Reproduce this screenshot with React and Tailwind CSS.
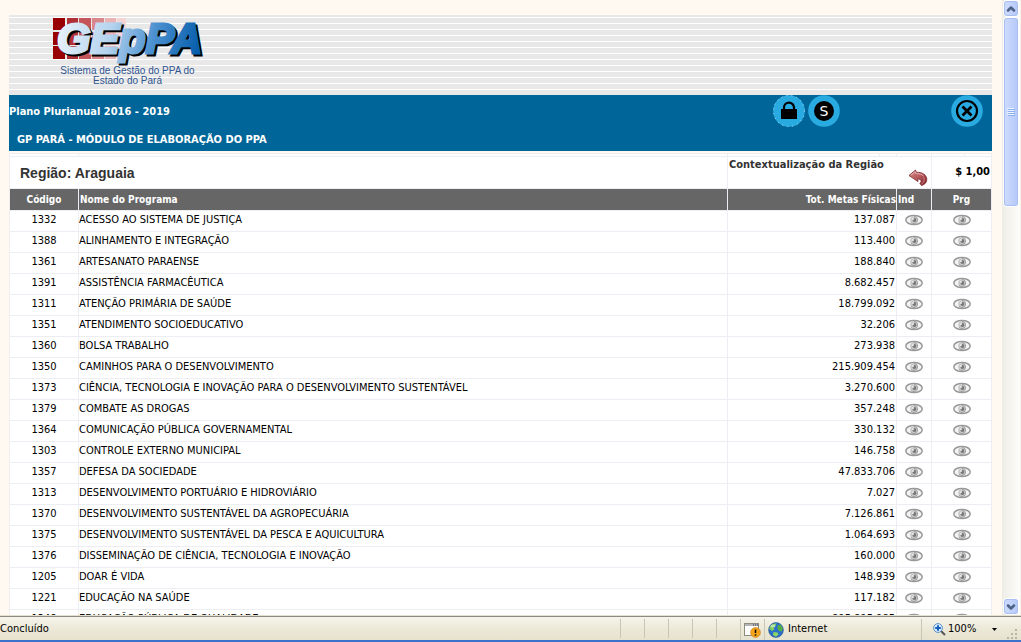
import React from 'react';
import { ChevronDown, ChevronUp } from 'lucide-react';

const PROGRAMS = [
  { code: '1332', name: 'ACESSO AO SISTEMA DE JUSTIÇA', total: '137.087' },
  { code: '1388', name: 'ALINHAMENTO E INTEGRAÇÃO', total: '113.400' },
  { code: '1361', name: 'ARTESANATO PARAENSE', total: '188.840' },
  { code: '1391', name: 'ASSISTÊNCIA FARMACÊUTICA', total: '8.682.457' },
  { code: '1311', name: 'ATENÇÃO PRIMÁRIA DE SAÚDE', total: '18.799.092' },
  { code: '1351', name: 'ATENDIMENTO SOCIOEDUCATIVO', total: '32.206' },
  { code: '1360', name: 'BOLSA TRABALHO', total: '273.938' },
  { code: '1350', name: 'CAMINHOS PARA O DESENVOLVIMENTO', total: '215.909.454' },
  { code: '1373', name: 'CIÊNCIA, TECNOLOGIA E INOVAÇÃO PARA O DESENVOLVIMENTO SUSTENTÁVEL', total: '3.270.600' },
  { code: '1379', name: 'COMBATE AS DROGAS', total: '357.248' },
  { code: '1364', name: 'COMUNICAÇÃO PÚBLICA GOVERNAMENTAL', total: '330.132' },
  { code: '1303', name: 'CONTROLE EXTERNO MUNICIPAL', total: '146.758' },
  { code: '1357', name: 'DEFESA DA SOCIEDADE', total: '47.833.706' },
  { code: '1313', name: 'DESENVOLVIMENTO PORTUÁRIO E HIDROVIÁRIO', total: '7.027' },
  { code: '1370', name: 'DESENVOLVIMENTO SUSTENTÁVEL DA AGROPECUÁRIA', total: '7.126.861' },
  { code: '1375', name: 'DESENVOLVIMENTO SUSTENTÁVEL DA PESCA E AQUICULTURA', total: '1.064.693' },
  { code: '1376', name: 'DISSEMINAÇÃO DE CIÊNCIA, TECNOLOGIA E INOVAÇÃO', total: '160.000' },
  { code: '1205', name: 'DOAR É VIDA', total: '148.939' },
  { code: '1221', name: 'EDUCAÇÃO NA SAÚDE', total: '117.182' },
  { code: '1348', name: 'EDUCAÇÃO PÚBLICA DE QUALIDADE', total: '895.895.985' },
];

const LOGO_COLUMNS = [
  { x: 0, width: 12, color: '#990000' },
  { x: 14, width: 11, color: '#b03035' },
  { x: 26, width: 12, color: '#c4555a' },
  { x: 39, width: 12, color: '#d9868a' },
  { x: 52, width: 11, color: '#eab4b6' },
  { x: 64, width: 9, color: '#f5d5d6' },
];

function Logo() {
  return (
    <svg viewBox="0 0 170 48" className="w-[170px] h-12 overflow-visible" role="img" aria-label="GEpPA">
      <defs>
        <linearGradient id="logoFill" gradientUnits="userSpaceOnUse" x1="8" y1="5" x2="150" y2="35">
          <stop offset="0" stopColor="#e6f1fa" />
          <stop offset="0.35" stopColor="#b4d3ee" />
          <stop offset="0.65" stopColor="#4a90cf" />
          <stop offset="1" stopColor="#0058a8" />
        </linearGradient>
      </defs>
      {LOGO_COLUMNS.map((col) =>
        [1, 15, 29].map((y) => (
          <rect key={`${col.x}-${y}`} x={col.x} y={y} width={col.width} height={y === 1 ? 12 : 13} fill={col.color} />
        ))
      )}
      <g
        fontFamily='"Liberation Sans", Arial, sans-serif'
        fontSize="43"
        fontWeight="bold"
        fontStyle="italic"
        strokeWidth="3"
      >
        <text x="6" y="38" fill="#000" stroke="#000">GEpPA</text>
        <text x="4" y="36" fill="url(#logoFill)" stroke="url(#logoFill)">GEpPA</text>
      </g>
    </svg>
  );
}

function EyeIcon() {
  return (
    <svg viewBox="0 0 18 12" className="w-[18px] h-3">
      <ellipse cx="9" cy="6" rx="8.2" ry="4.6" fill="#f4f4f4" stroke="#989898" strokeWidth="1.5" />
      <circle cx="9" cy="6" r="3.8" fill="#c8c8c8" />
      <path d="M9 2.4a3.6 3.6 0 0 1 0 7.2 4.5 4.5 0 0 1-3-1.2" fill="none" stroke="#a0a0a0" />
      <circle cx="9.4" cy="6" r="1.9" fill="#777" />
      <circle cx="8" cy="5" r="1" fill="#eee" />
    </svg>
  );
}

function LockIcon() {
  return (
    <svg viewBox="0 0 32 32" className="w-8 h-8">
      <circle cx="16" cy="16" r="15.8" fill="#29abe2" />
      <circle cx="16" cy="16" r="15.5" fill="none" stroke="#d5eefa" strokeWidth="0.8" strokeDasharray="1 4" />
      <path d="M11 15v-2.5a5 4.8 0 0 1 10 0V15" fill="none" stroke="#000" strokeWidth="2.2" />
      <rect x="8" y="14" width="16" height="10" fill="#000" />
    </svg>
  );
}

function SIcon() {
  return (
    <svg viewBox="0 0 32 32" className="w-8 h-8">
      <circle cx="16" cy="16" r="15.8" fill="#29abe2" />
      <circle cx="16" cy="16" r="10" fill="#000" />
      <text x="16" y="21" textAnchor="middle" fontFamily='"DejaVu Sans", sans-serif' fontSize="14" fill="#fff">
        S
      </text>
    </svg>
  );
}

function CloseIcon() {
  return (
    <svg viewBox="0 0 32 32" className="w-8 h-8">
      <circle cx="16" cy="16" r="15.8" fill="#29abe2" />
      <circle cx="16" cy="16" r="10" fill="none" stroke="#000" strokeWidth="2.2" />
      <path d="M11.5 11.5l9 9M20.5 11.5l-9 9" stroke="#000" strokeWidth="2.8" />
    </svg>
  );
}

function BackIcon() {
  return (
    <svg viewBox="0 0 20 18" className="w-5 h-[18px]">
      <defs>
        <linearGradient id="backFill" x1="0" y1="0" x2="1" y2="1">
          <stop offset="0" stopColor="#d88a8a" />
          <stop offset="0.5" stopColor="#b75a5c" />
          <stop offset="1" stopColor="#7c1f24" />
        </linearGradient>
      </defs>
      <path
        d="M1 6.5L7.5 1L8.5 3.4C14 2.8 18.8 6 18.8 10.4C18.8 13.6 16.5 15.6 13.5 16.5L11.8 14.2C14.2 12.8 13.4 10.4 9.8 9.8L10 12.6Z"
        fill="url(#backFill)"
        stroke="#7c2a2e"
        strokeWidth="0.8"
      />
      <path d="M3 6.2L7.2 2.8L8 4.6C11 4.4 14 5.4 15.5 7" fill="none" stroke="#edc0c0" strokeWidth="0.8" />
      <path d="M15.5 8C17 11 16 13.5 13.5 15" fill="none" stroke="#d08a8c" strokeWidth="0.9" />
    </svg>
  );
}

function GlobeIcon() {
  return (
    <svg viewBox="0 0 16 16" className="w-4 h-4">
      <circle cx="8" cy="8" r="7.4" fill="#2a6fc9" stroke="#28508c" strokeWidth="0.6" />
      <path d="M2 4.5C4 1.5 7 1 8.5 1.6L7.5 4L5.5 5.5L6.5 7.5L4 9L1.4 7Z" fill="#7fce5a" />
      <path d="M10 3l3 .3 1.8 3.2-1.2 3L11 9 9.5 6.5z" fill="#52b043" />
      <path d="M5.5 10l4 .5 1 2-2.5 2.3L5 13z" fill="#8cd665" />
      <ellipse cx="5" cy="4" rx="2.4" ry="1.5" fill="#fff" opacity="0.5" />
    </svg>
  );
}

function PopupBlockedIcon() {
  return (
    <svg viewBox="0 0 17 16" className="w-[17px] h-4">
      <rect x="0.5" y="1.5" width="14" height="12" fill="#fff" stroke="#8c8c84" />
      <path d="M1 3h13" stroke="#b4b4b4" strokeWidth="2" />
      <path d="M9 3h1M11 3h1M13 3h1" stroke="#335" />
      <circle cx="11.5" cy="10.5" r="4.9" fill="#f7a51c" stroke="#c87a10" strokeWidth="0.6" />
      <path d="M11.5 7.5v3.6M11.5 12.2v1.6" stroke="#111" strokeWidth="1.6" />
    </svg>
  );
}

function ZoomIcon() {
  return (
    <svg viewBox="0 0 13 13" className="w-[13px] h-[13px]">
      <path d="M8 8l4 4" stroke="#555" strokeWidth="2" />
      <circle cx="5" cy="5" r="4.4" fill="#d9ecfb" stroke="#5b8fc8" />
      <path d="M5 2.2v5.6M2.2 5h5.6" stroke="#1560bd" strokeWidth="2" />
    </svg>
  );
}

function PageHeader() {
  return (
    <header>
      <div className="h-20 bg-[repeating-linear-gradient(to_bottom,#e8e8e8_0px,#e8e8e8_2px,#ffffff_2px,#ffffff_3px,#e8e8e8_3px,#e8e8e8_6px)]">
        <div className="w-[237px] pt-0.5 flex flex-col items-center">
          <div className="w-full pl-11 h-12">
            <Logo />
          </div>
          <p className="pt-px text-center text-[10px] leading-[10px] text-[#2f5590] font-['Liberation_Sans',Arial,sans-serif]">
            Sistema de Gestão do PPA do
            <br />
            Estado do Pará
          </p>
        </div>
      </div>
      <div className="h-14 bg-[#006699] text-white flex items-start">
        <div className="flex-1 pt-[3px] text-[11px] font-bold leading-7">
          <p>Plano Plurianual 2016 - 2019</p>
          <h1 className="pl-2">GP PARÁ - MÓDULO DE ELABORAÇÃO DO PPA</h1>
        </div>
        <div className="flex gap-[3px]">
          <button type="button" aria-label="Bloquear"><LockIcon /></button>
          <button type="button" aria-label="S"><SIcon /></button>
        </div>
        <button type="button" aria-label="Fechar" className="ml-[111px] mr-[9px]"><CloseIcon /></button>
      </div>
    </header>
  );
}

function ProgramTable() {
  return (
    <table className="mt-0.5 w-full table-fixed border-separate border-spacing-0 border-r border-[#eceef4] bg-white text-[11px]">
      <colgroup>
        <col className="w-[69px]" />
        <col />
        <col className="w-[169px]" />
        <col className="w-[35px]" />
        <col className="w-[60px]" />
      </colgroup>
      <thead>
        <tr className="h-1 *:h-1 *:p-0 *:border-l *:border-y *:border-[#eceef4]">
          <td />
          <td />
          <td><div className="h-0.5 mr-4 border-r border-[#eceef4]" /></td>
          <td />
          <td><div className="h-0.5 mr-[26px] border-r border-[#eceef4]" /></td>
        </tr>
        <tr className="h-8 *:h-8 *:p-0 *:border-l *:border-b *:border-[#eceef4]">
          <td colSpan={2}>
            <h2 className="pl-2.5 text-[14px] leading-4 font-bold text-[#333] font-['Liberation_Sans',Arial,sans-serif]">
              Região: Araguaia
            </h2>
          </td>
          <td colSpan={2}>
            <div className="flex items-start justify-between h-[31px] pl-px pr-[3px] font-bold text-[#333]">
              <span className="leading-4 whitespace-nowrap">Contextualização da Região</span>
              <button type="button" aria-label="Voltar" className="mt-3"><BackIcon /></button>
            </div>
          </td>
          <td className="text-right font-bold">
            <span className="pr-px">$ 1,00</span>
          </td>
        </tr>
        <tr className="h-[22px] *:h-[22px] *:p-0 *:border-l *:border-b *:border-[#eceef4] *:bg-[#666] text-[10px] text-white">
          <th>Código</th>
          <th className="text-left"><span className="pl-px">Nome do Programa</span></th>
          <th className="text-right">Tot. Metas Físicas</th>
          <th className="text-left"><span className="pl-px">Ind</span></th>
          <th>Prg</th>
        </tr>
      </thead>
      <tbody>
        {PROGRAMS.map((program) => (
          <tr key={program.code} className="h-[21px] *:h-[21px] *:p-0 *:border-l *:border-b *:border-[#eceef4] leading-[18px]">
            <td className="text-center align-top">{program.code}</td>
            <td className="align-top whitespace-nowrap">{program.name}</td>
            <td className="text-right align-top"><span className="pr-px">{program.total}</span></td>
            <td>
              <button type="button" aria-label={`Indicadores ${program.code}`} className="flex mx-auto pb-0.5">
                <EyeIcon />
              </button>
            </td>
            <td>
              <button type="button" aria-label={`Programa ${program.code}`} className="flex mx-auto pb-0.5">
                <EyeIcon />
              </button>
            </td>
          </tr>
        ))}
      </tbody>
    </table>
  );
}

function ScrollBar() {
  const box =
    'w-4 rounded-sm border border-white bg-linear-to-r from-[#cfdcfe] to-[#b4c8f8] outline outline-[#a9bff0] -outline-offset-2 text-[#4d6185] flex items-center justify-center';
  return (
    <div className="w-[19px] shrink-0 pl-px border-r border-[#f5f3ea] bg-linear-to-r from-[#eeede5] to-[#fdfdfb] flex flex-col">
      <button type="button" aria-label="Rolar para cima" className={`${box} h-[17px]`}>
        <ChevronUp className="w-3 h-3" strokeWidth={5} />
      </button>
      <div className={`${box} h-[190px]`}>
        <svg viewBox="0 0 8 8" className="w-2 h-2">
          <path d="M0 .5h7M0 2.5h7M0 4.5h7M0 6.5h7" stroke="#eef4fe" />
          <path d="M1 1.5h7M1 3.5h7M1 5.5h7M1 7.5h7" stroke="#8cb0f8" />
        </svg>
      </div>
      <div className="flex-1" />
      <button type="button" aria-label="Rolar para baixo" className={`${box} h-[17px]`}>
        <ChevronDown className="w-3 h-3" strokeWidth={5} />
      </button>
    </div>
  );
}

function StatusBar() {
  return (
    <footer className="shrink-0 border-t border-[#e4e0d0] border-b-2 border-b-[#3a72cc] text-[11px]">
      <div className="h-6 pt-0.5 border-t border-[#8c8a82] bg-linear-to-b from-[#f6f4ec] via-[#ece9d8] to-[#e6e2cc] flex items-stretch">
        <span className="flex-1 flex items-center">Concluído</span>
        {[0, 1, 2, 3, 4].map((pane) => (
          <span key={pane} className="w-6 mb-0.5 border-l border-[#c9c6b6]" />
        ))}
        <span className="w-6 border-l border-[#c9c6b6] flex items-center justify-center">
          <PopupBlockedIcon />
        </span>
        <span className="w-[157px] pl-[3px] border-l border-[#c9c6b6] flex items-center gap-1">
          <GlobeIcon />
          Internet
        </span>
        <button type="button" className="w-[100px] pl-[11px] border-l border-[#c9c6b6] flex items-center gap-0.5">
          <ZoomIcon />
          100%
          <svg viewBox="0 0 5 3" className="ml-3.5 w-[5px] h-[3px]">
            <path d="M0 0h5L2.5 3z" />
          </svg>
          <svg viewBox="0 0 11 11" className="ml-2 self-end w-[11px] h-[11px] shrink-0" fill="#b8b4a2">
            <path d="M8 0h2v2H8zM4 4h2v2H4zM8 4h2v2H8zM0 8h2v2H0zM4 8h2v2H4zM8 8h2v2H8z" />
          </svg>
        </button>
      </div>
    </footer>
  );
}

export default function App() {
  return (
    <div className="h-screen flex flex-col overflow-hidden text-black font-['DejaVu_Sans_Condensed','DejaVu_Sans',sans-serif]">
      <div className="flex-1 min-h-0 flex bg-[#fff9f1]">
        <main className="flex-1 min-w-0 overflow-hidden pt-[15px] pl-[9px] pr-2.5">
          <PageHeader />
          <ProgramTable />
        </main>
        <ScrollBar />
      </div>
      <StatusBar />
    </div>
  );
}
